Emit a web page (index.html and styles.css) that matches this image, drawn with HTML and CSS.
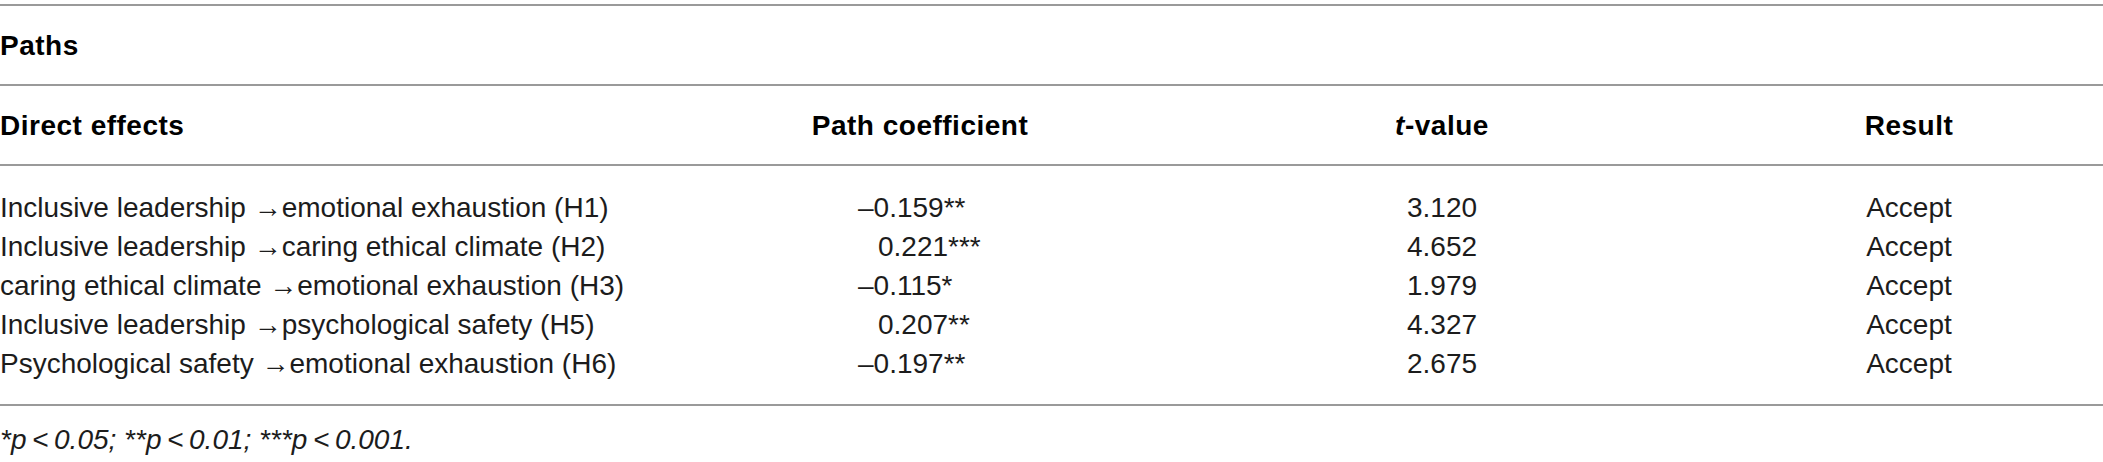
FILE: index.html
```html
<!DOCTYPE html>
<html>
<head>
<meta charset="utf-8">
<link rel="stylesheet" href="styles.css">
</head>
<body>
<div class="page">
  <table class="tbl">
    <colgroup>
      <col class="c1"><col class="c2"><col class="c3"><col class="c4">
    </colgroup>
    <thead>
      <tr class="group"><th class="left" colspan="4">Paths</th></tr>
      <tr class="head">
        <th class="left">Direct effects</th>
        <th class="center">Path coefficient</th>
        <th class="center"><i>t</i>-value</th>
        <th class="center">Result</th>
      </tr>
    </thead>
    <tbody>
      <tr class="first">
        <td>Inclusive leadership →emotional exhaustion (H1)</td>
        <td class="num">–0.159**</td>
        <td class="center">3.120</td>
        <td class="center">Accept</td>
      </tr>
      <tr>
        <td>Inclusive leadership →caring ethical climate (H2)</td>
        <td class="num pos">0.221***</td>
        <td class="center">4.652</td>
        <td class="center">Accept</td>
      </tr>
      <tr>
        <td>caring ethical climate →emotional exhaustion (H3)</td>
        <td class="num">–0.115*</td>
        <td class="center">1.979</td>
        <td class="center">Accept</td>
      </tr>
      <tr>
        <td>Inclusive leadership →psychological safety (H5)</td>
        <td class="num pos">0.207**</td>
        <td class="center">4.327</td>
        <td class="center">Accept</td>
      </tr>
      <tr class="last">
        <td>Psychological safety →emotional exhaustion (H6)</td>
        <td class="num">–0.197**</td>
        <td class="center">2.675</td>
        <td class="center">Accept</td>
      </tr>
    </tbody>
  </table>
  <p class="note">*<i>p</i>&#8201;&lt;&#8201;0.05; **<i>p</i>&#8201;&lt;&#8201;0.01; ***<i>p</i>&#8201;&lt;&#8201;0.001.</p>
</div>
</body>
</html>
```

FILE: styles.css
```css
html, body {
  margin: 0;
  padding: 0;
  background: #ffffff;
}

body {
  font-family: "Liberation Sans", Arial, sans-serif;
  font-size: 28px;
  color: #1c1c1c;
}

.page {
  padding-top: 4px;
  width: 2103px;
}

.tbl {
  width: 2103px;
  border-collapse: collapse;
  table-layout: fixed;
  border-top: 2px solid #9a9a9a;
  border-bottom: 2px solid #9a9a9a;
}

.c1 { width: 671px; }
.c2 { width: 498px; }
.c3 { width: 546px; }
.c4 { width: 388px; }

th, td {
  padding: 0;
  white-space: nowrap;
  line-height: 39px;
}

th {
  font-weight: bold;
  color: #000;
  letter-spacing: 0.5px;
}

.group th,
.head th {
  height: 78px;
  vertical-align: middle;
  border-bottom: 2px solid #9a9a9a;
}

.left { text-align: left; }
.center { text-align: center; }

td { text-align: left; }

.num { padding-left: 187px; }
.num.pos { padding-left: 207px; }

tbody tr.first td { padding-top: 22px; }
tbody tr.last td { padding-bottom: 21px; }

.note {
  margin: 14px 0 0 0;
  line-height: 40px;
  font-style: italic;
}
.note i { font-style: italic; }
```
